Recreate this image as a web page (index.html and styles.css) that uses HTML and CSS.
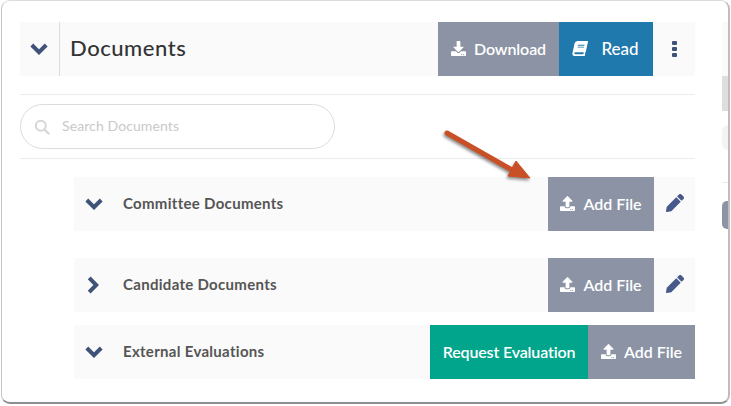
FILE: index.html
```html
<!DOCTYPE html>
<html lang="en">
<head>
<meta charset="utf-8">
<title>Documents</title>
<link rel="stylesheet" href="styles.css">
</head>
<body>
<svg class="defs" width="0" height="0" aria-hidden="true">
  <symbol id="i-down" viewBox="0 0 18 12"><path d="M1.800 2 9 9.200 16.200 2" fill="none" stroke="currentColor" stroke-width="4"/></symbol>
  <symbol id="i-right" viewBox="0 0 12 18"><path d="M2.200 1.800 9.200 9l-7 7.200" fill="none" stroke="currentColor" stroke-width="4"/></symbol>
  <symbol id="i-upload" viewBox="0 0 512 512"><path fill="currentColor" d="M296 384h-80c-13.3 0-24-10.7-24-24V192h-87.7c-17.8 0-26.7-21.5-14.1-34.1L242.3 5.7c7.5-7.5 19.8-7.5 27.3 0l152.2 152.2c12.6 12.6 3.7 34.1-14.1 34.1H320v168c0 13.3-10.7 24-24 24zm216-8v112c0 13.3-10.7 24-24 24H24c-13.3 0-24-10.7-24-24V376c0-13.3 10.7-24 24-24h136v8c0 30.9 25.1 56 56 56h80c30.9 0 56-25.1 56-56v-8h136c13.3 0 24 10.7 24 24zm-124 88c0-11-9-20-20-20s-20 9-20 20 9 20 20 20 20-9 20-20zm64 0c0-11-9-20-20-20s-20 9-20 20 9 20 20 20 20-9 20-20z"/></symbol>
  <symbol id="i-pencil" viewBox="0 0 512 512"><path fill="currentColor" d="M497.900 142.100l-46.100 46.100c-4.700 4.700-12.300 4.700-17 0l-111-111c-4.700-4.700-4.700-12.300 0-17l46.100-46.100c18.700-18.700 49.100-18.700 67.900 0l60.100 60.100c18.800 18.700 18.800 49.100 0 67.900zM284.200 99.800 21.600 362.400.4 483.900c-2.900 16.400 11.400 30.600 27.800 27.800l121.500-21.300 262.600-262.600c4.700-4.700 4.700-12.300 0-17l-111-111c-4.800-4.700-12.400-4.700-17.100 0z"/></symbol>
</svg>
<div class="window">
  <main class="main">
    <header class="head">
      <div class="head-toggle"><svg class="chev-down"><use href="#i-down"/></svg></div>
      <h1 class="head-title">Documents</h1>
      <a class="btn btn-gray btn-download">
        <svg class="ico" viewBox="0 0 512 512"><path fill="currentColor" d="M216 0h80c13.300 0 24 10.700 24 24v168h87.700c17.800 0 26.700 21.500 14.100 34.100L269.700 378.300c-7.500 7.500-19.800 7.500-27.300 0L90.100 226.100c-12.600-12.600-3.700-34.100 14.100-34.100H192V24c0-13.300 10.700-24 24-24zm296 376v112c0 13.300-10.700 24-24 24H24c-13.300 0-24-10.700-24-24V376c0-13.300 10.700-24 24-24h146.700l49 49c20.100 20.100 52.500 20.100 72.600 0l49-49H488c13.300 0 24 10.700 24 24zm-124 88c0-11-9-20-20-20s-20 9-20 20 9 20 20 20 20-9 20-20zm64 0c0-11-9-20-20-20s-20 9-20 20 9 20 20 20 20-9 20-20z"/></svg>
        <span>Download</span>
      </a>
      <a class="btn btn-blue btn-read">
        <svg class="ico ico-book" viewBox="0 0 448 512"><path fill="currentColor" d="M448 360V24c0-13.300-10.700-24-24-24H96C43 0 0 43 0 96v320c0 53 43 96 96 96h328c13.300 0 24-10.700 24-24v-16c0-7.500-3.500-14.300-8.900-18.700-4.200-15.400-4.200-59.300 0-74.700 5.400-4.300 8.900-11.100 8.900-18.600zM128 134c0-3.300 2.700-6 6-6h212c3.300 0 6 2.700 6 6v20c0 3.300-2.700 6-6 6H134c-3.300 0-6-2.700-6-6v-20zm0 64c0-3.300 2.700-6 6-6h212c3.300 0 6 2.700 6 6v20c0 3.300-2.700 6-6 6H134c-3.300 0-6-2.700-6-6v-20zm253.400 250H96c-17.700 0-32-14.300-32-32 0-17.600 14.400-32 32-32h285.400c-1.900 17.100-1.900 46.900 0 64z"/></svg>
        <span>Read</span>
      </a>
      <div class="kebab"><i></i><i></i><i></i></div>
    </header>

    <div class="search-bar">
      <div class="search">
        <svg class="search-ico" viewBox="0 0 16 16"><circle cx="6.800" cy="6.800" r="5" fill="none" stroke="currentColor" stroke-width="2"/><path d="m10.500 10.500 4 4" stroke="currentColor" stroke-width="2.200" stroke-linecap="round"/></svg>
        <span>Search Documents</span>
      </div>
    </div>

    <section class="row row-a">
      <span class="row-toggle"><svg class="chev-down"><use href="#i-down"/></svg></span>
      <span class="row-title">Committee Documents</span>
      <a class="btn btn-gray btn-add"><svg class="ico"><use href="#i-upload"/></svg><span>Add File</span></a>
      <span class="edit"><svg class="ico"><use href="#i-pencil"/></svg></span>
    </section>
    <section class="row row-b">
      <span class="row-toggle"><svg class="chev-right"><use href="#i-right"/></svg></span>
      <span class="row-title">Candidate Documents</span>
      <a class="btn btn-gray btn-add"><svg class="ico"><use href="#i-upload"/></svg><span>Add File</span></a>
      <span class="edit"><svg class="ico"><use href="#i-pencil"/></svg></span>
    </section>
    <section class="row row-c">
      <span class="row-toggle"><svg class="chev-down"><use href="#i-down"/></svg></span>
      <span class="row-title">External Evaluations</span>
      <a class="btn btn-green btn-request"><span>Request Evaluation</span></a>
      <a class="btn btn-gray btn-add-wide"><svg class="ico"><use href="#i-upload"/></svg><span>Add File</span></a>
    </section>
  </main>

  <aside class="side">
    <div class="side-head"></div>
    <div class="side-shade"></div>
    <div class="side-field"></div>
    <div class="side-rule"></div>
    <div class="side-btn"></div>
  </aside>

  <svg class="arrow" width="100" height="70" viewBox="0 0 100 70">
    <path d="M9 9 74 46" stroke="#c94f26" stroke-width="5" stroke-linecap="round"/>
    <path d="M78 37 92 54 70 52 Z" fill="#c94f26" stroke="#c94f26" stroke-width="1" stroke-linejoin="round"/>
  </svg>
</div>
</body>
</html>
```

FILE: styles.css
```css
* { box-sizing: border-box; }
html, body { margin: 0; padding: 0; background: #fff; }
body { width: 731px; height: 406px; overflow: hidden; font-family: "Lato", "Open Sans", sans-serif; }
.defs { display: block; height: 0; }

.window {
  position: relative;
  display: flex;
  width: 729px;
  height: 404px;
  margin-left: 1px;
  background: #fff;
  border: 1px solid #dcdcdc;
  border-bottom: 2px solid #8e8e8e;
  border-right: 2px solid #bdbdbd;
  border-left: 1px solid #c4c4c4;
  border-radius: 9px;
  overflow: hidden;
}

.main { width: 693px; padding: 21px 0 0 18px; flex: none; }
.side { margin-left: 27px; width: 7px; padding-top: 21px; flex: none; }

.side-head { height: 54px; background: #fafafa; }
.side-shade { height: 35px; background: #dedede; }
.side-field { height: 25px; margin-top: 14px; background: #f3f3f3; border-radius: 6px 0 0 6px; }
.side-rule { height: 1px; margin-top: 32px; background: #e8e8e8; }
.side-btn { height: 28px; margin-top: 18px; background: #8b93a5; border-radius: 5px 0 0 5px; }

.head { display: flex; align-items: stretch; height: 54px; background: #fafafa; }
.head-toggle { width: 40px; padding-right: 2px; display: flex; align-items: center; justify-content: center; border-right: 1px solid #dcdcdc; }
.head-title { flex: 1; margin: 0; padding-left: 10px; font-size: 22px; letter-spacing: .55px; font-weight: 500; color: #333; line-height: 52px; }

.chev-down { width: 18px; height: 12px; color: #3f5378; display: block; }
.chev-right { width: 12px; height: 18px; color: #3f5378; display: block; }

.btn { display: flex; align-items: center; justify-content: center; color: #fff; font-size: 16px; font-weight: 600; }
.btn span { padding-bottom: 2px; }
.btn-gray { background: #8b93a5; }
.btn-blue { background: #1f79ad; }
.btn-green { background: #00a58c; }
.ico { width: 15px; height: 15px; display: block; flex: none; margin-bottom: 2px; }

.btn-download { width: 121px; gap: 8px; }
.btn-download span { letter-spacing: -.1px; }
.btn-read { width: 94px; gap: 14px; }
.btn-read span { font-size: 17px; font-weight: 500; }
.ico-book { transform: skewX(-12deg); height: 15px; width: 14px; }
.kebab { width: 42px; padding-bottom: 1px; display: flex; flex-direction: column; align-items: center; justify-content: center; gap: 2px; }
.kebab i { width: 5px; height: 4px; background: #3f5378; border-radius: 1px; }

.search-bar {
  margin-top: 18px;
  padding: 9px 0 9px;
  height: 65px;
  border-top: 1px solid #ececec;
  border-bottom: 1px solid #ececec;
}
.search {
  width: 315px;
  height: 45px;
  border: 1px solid #dcdcdc;
  border-radius: 23px;
  display: flex;
  align-items: center;
  padding-left: 13px;
  gap: 12px;
  color: #c9c9c9;
  font-size: 14px;
  letter-spacing: .1px;
}
.search span { padding-bottom: 2px; }
.search-ico { width: 16px; height: 16px; color: #d6d6d6; display: block; }

.row {
  display: flex;
  align-items: stretch;
  height: 54px;
  margin-left: 54px;
  background: #fafafa;
}
.row-a { margin-top: 18px; }
.row-b { margin-top: 27px; }
.row-c { margin-top: 13px; }
.row-toggle { width: 49px; padding-left: 11px; padding-bottom: 1px; display: flex; align-items: center; }
.row-toggle .chev-right { margin-left: 2px; }
.row-title { flex: 1; font-size: 15px; letter-spacing: .3px; font-weight: 700; color: #555; line-height: 53px; }
.btn-add { width: 106px; gap: 8px; }
.btn-add-wide { width: 107px; gap: 8px; }
.btn-request { width: 158px; }
.btn-request span { letter-spacing: -.15px; }
.edit { width: 41px; display: flex; align-items: center; justify-content: center; color: #46598a; }
.edit .ico { width: 18px; height: 18px; }

.arrow { position: absolute; left: 436px; top: 123px; filter: drop-shadow(-1px 2px 1.5px rgba(0,0,0,.45)); }
```
